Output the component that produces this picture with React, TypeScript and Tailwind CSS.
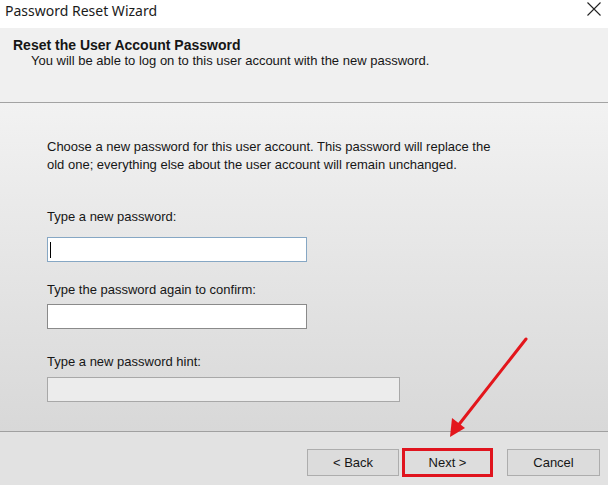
import React from "react";

function CloseIcon() {
  return (
    <svg width="16" height="16" viewBox="0 0 16 16" className="text-[#222]">
      <path d="M1.5 1.5 L14.5 14.5 M14.5 1.5 L1.5 14.5" stroke="currentColor" strokeWidth="1.1" fill="none" />
    </svg>
  );
}

function Arrow() {
  return (
    <svg className="pointer-events-none absolute left-0 top-0" width="608" height="485" viewBox="0 0 608 485">
      <line x1="526" y1="339" x2="457" y2="427" stroke="#e3161c" strokeWidth="3" strokeLinecap="round" />
      <polygon points="450,437 452,418 465,428" fill="#e3161c" />
    </svg>
  );
}

export default function App() {
  return (
    <div
      className="relative flex h-[485px] w-[608px] flex-col overflow-hidden bg-white text-[13px] text-[#161616]"
      style={{ fontFamily: '"Liberation Sans", Arial, sans-serif' }}
    >
      {/* title bar */}
      <div className="flex h-[28px] items-start justify-between bg-white pl-[5px] pr-[6px]">
        <span className="mt-[1px] text-[14px] leading-[20px] text-[#1b1b1b]" style={{ fontFamily: '"Noto Sans", sans-serif' }}>
          Password Reset Wizard
        </span>
        <span className="mt-[1px]">
          <CloseIcon />
        </span>
      </div>

      {/* header */}
      <div className="h-[75px] border-b border-[#a3a3a3] bg-[#f0f0f0] pl-[13px] pt-[9px]">
        <div className="text-[14px] font-bold leading-[16px]">Reset the User Account Password</div>
        <div className="pl-[18px] leading-[16px]">You will be able to log on to this user account with the new password.</div>
      </div>

      {/* body */}
      <div className="flex flex-1 flex-col bg-gradient-to-b from-[#f2f2f2] to-[#d8d8d8] pl-[47px] pt-[35px] leading-[18px]">
        <p className="w-[460px]">
          Choose a new password for this user account. This password will replace the
          old one; everything else about the user account will remain unchanged.
        </p>
        <label className="mt-[34px]">Type a new password:</label>
        <div className="mt-[11px] flex h-[25px] w-[260px] items-center border border-[#86a7c4] bg-white pl-[2px]">
          <span className="h-[16px] w-px bg-black" />
        </div>
        <label className="mt-[19px]">Type the password again to confirm:</label>
        <div className="mt-[5px] h-[25px] w-[260px] border border-[#8a8a8a] bg-white" />
        <label className="mt-[24px]">Type a new password hint:</label>
        <div className="mt-[6px] h-[25px] w-[353px] border border-[#a8a8a8] bg-[#ececec]" />
      </div>

      {/* footer */}
      <div className="flex h-[54px] items-start border-t border-[#a0a0a0] bg-[#e2e2e2] pl-[307px] pt-[17px]">
        <button className="flex h-[27px] w-[92px] items-center justify-center border border-[#adadad] bg-[#dcdcdc]">
          &lt; Back
        </button>
        <div className="-mt-[1px] ml-[3px] flex h-[29px] w-[91px] border-[3px] border-[#e0141e]">
          <button className="flex flex-1 items-center justify-center bg-[#dddddd]">Next &gt;</button>
        </div>
        <button className="ml-[14px] flex h-[27px] w-[93px] items-center justify-center border border-[#adadad] bg-[#dcdcdc]">
          Cancel
        </button>
      </div>

      <Arrow />
    </div>
  );
}
